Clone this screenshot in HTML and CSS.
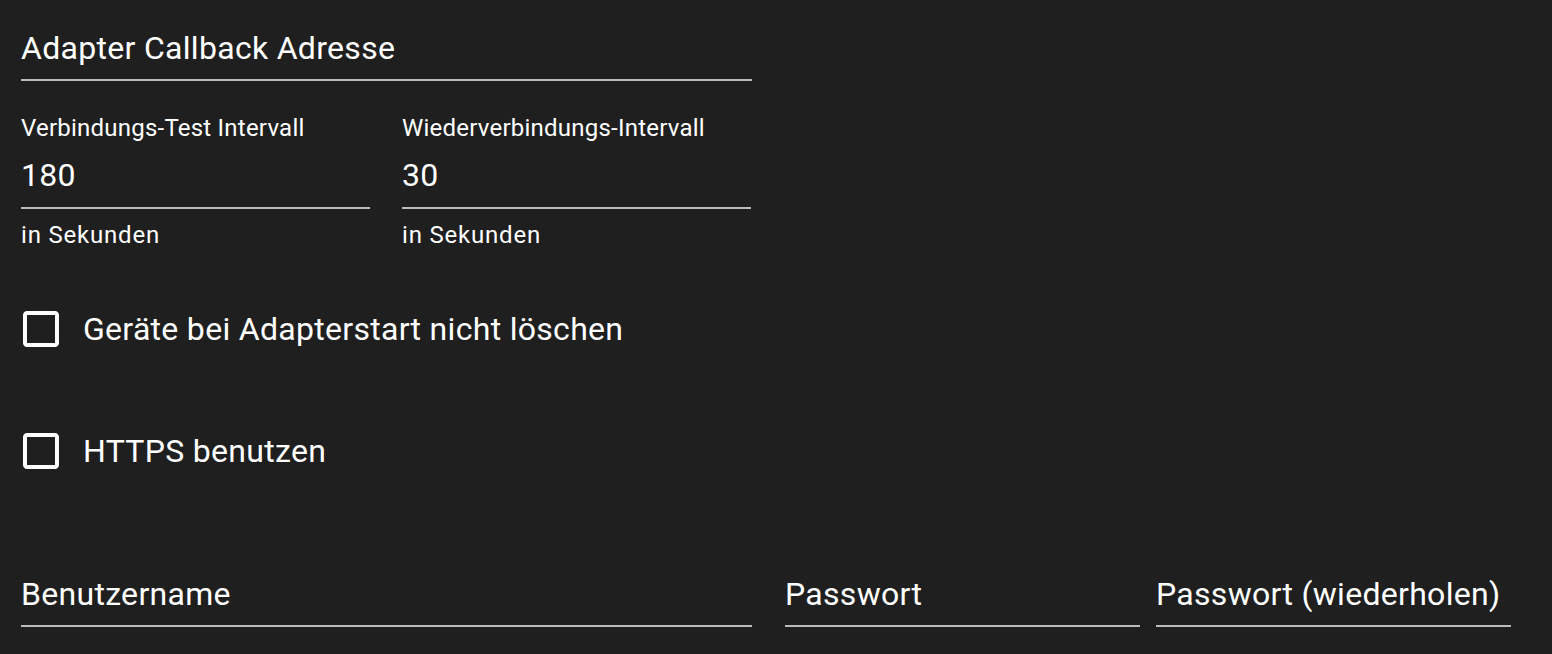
FILE: index.html
```html
<!DOCTYPE html>
<html lang="de">
<head>
    <meta charset="UTF-8">
    <meta name="viewport" content="width=device-width, initial-scale=1.0">
    <title>Adapter Einstellungen</title>
    <link rel="stylesheet" href="styles.css">
</head>
<body>
    <div class="settings">
        <div class="field field-wide">
            <div class="field-input empty">Adapter Callback Adresse</div>
        </div>

        <div class="field-row">
            <div class="field field-half">
                <label class="field-label">Verbindungs-Test Intervall</label>
                <div class="field-input">180</div>
                <div class="helper">in Sekunden</div>
            </div>
            <div class="field field-half">
                <label class="field-label">Wiederverbindungs-Intervall</label>
                <div class="field-input">30</div>
                <div class="helper">in Sekunden</div>
            </div>
        </div>

        <label class="check check-first">
            <span class="check-icon">
                <svg viewBox="0 0 24 24" width="48" height="48"><path d="M19 5v14H5V5h14m0-2H5c-1.11 0-2 .9-2 2v14c0 1.1.89 2 2 2h14c1.1 0 2-.9 2-2V5c0-1.1-.9-2-2-2z"/></svg>
            </span>
            <span class="check-label">Geräte bei Adapterstart nicht löschen</span>
        </label>

        <label class="check check-second">
            <span class="check-icon">
                <svg viewBox="0 0 24 24" width="48" height="48"><path d="M19 5v14H5V5h14m0-2H5c-1.11 0-2 .9-2 2v14c0 1.1.89 2 2 2h14c1.1 0 2-.9 2-2V5c0-1.1-.9-2-2-2z"/></svg>
            </span>
            <span class="check-label">HTTPS benutzen</span>
        </label>

        <div class="field-row login-row">
            <div class="field user-field">
                <div class="field-input empty">Benutzername</div>
            </div>
            <div class="field pass-field">
                <div class="field-input empty">Passwort</div>
            </div>
            <div class="field pass-repeat">
                <div class="field-input empty">Passwort (wiederholen)</div>
            </div>
        </div>
    </div>
</body>
</html>
```

FILE: styles.css
```css
html, body {
    margin: 0;
    padding: 0;
    background-color: #1f1f1f;
}
body {
    font-family: Roboto, "Noto Sans", Arial, sans-serif;
    color: #fff;
}
.settings {
    padding: 16px 0 0 21px;
}
.field-wide {
    width: 731px;
}
.field-input {
    font-size: 32px;
    line-height: 46px;
    letter-spacing: 0.3px;
    padding: 8px 0 9px;
    border-bottom: 2px solid #bcbcbc;
    white-space: nowrap;
}
.field-input.empty {
    padding: 9px 0 8px;
}
.field-row {
    display: flex;
    margin-top: 32px;
}
.field-half {
    width: 349px;
}
.field-half + .field-half {
    margin-left: 32px;
}
.field-label {
    display: block;
    font-size: 24px;
    line-height: 28px;
    letter-spacing: 0.225px;
    padding-top: 1px;
    margin-bottom: 2px;
}
.helper {
    font-size: 24px;
    line-height: 1.66;
    letter-spacing: 0.8px;
    margin-top: 7px;
}
.check {
    display: flex;
    align-items: center;
    margin-left: -22px;
    cursor: pointer;
}
.check-first {
    margin-top: 31px;
}
.check-second {
    margin-top: 38px;
}
.check-icon {
    display: flex;
    padding: 18px;
}
.check-icon svg {
    fill: #fff;
}
.check-label {
    font-size: 32px;
    line-height: 1.5;
    letter-spacing: 0.3px;
}
.login-row {
    margin-top: 69px;
}
.user-field {
    width: 731px;
}
.pass-field {
    width: 355px;
    margin-left: 33px;
}
.pass-repeat {
    width: 355px;
    margin-left: 16px;
}
```
